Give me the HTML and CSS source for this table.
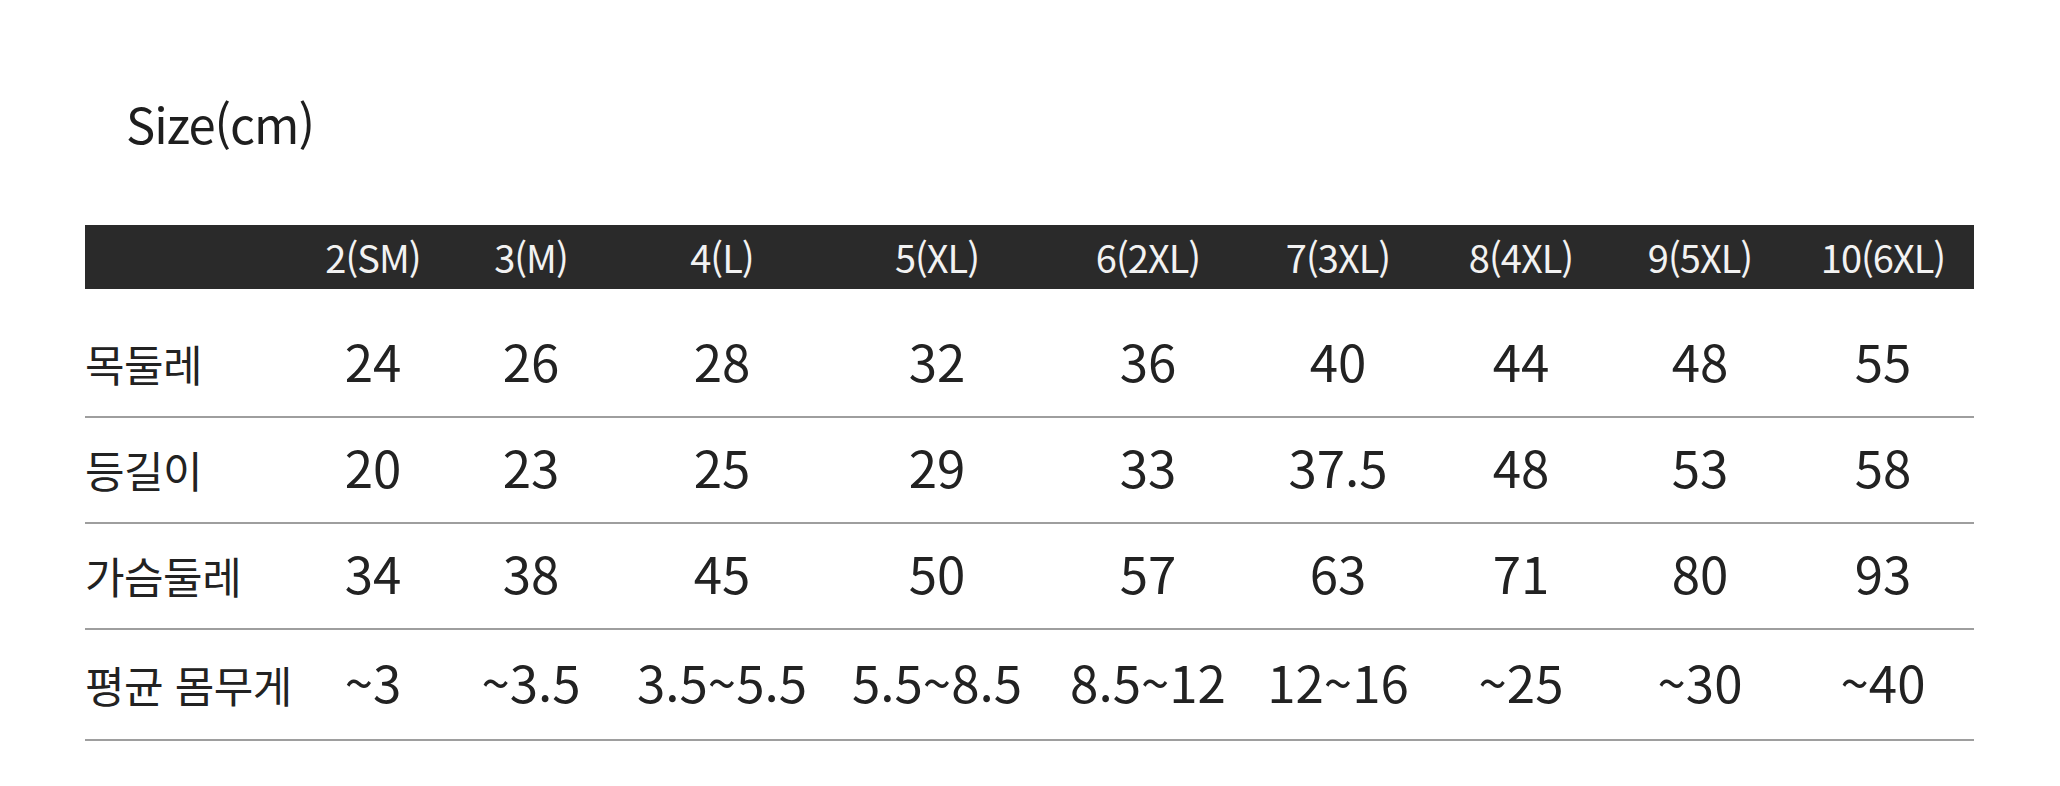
FILE: index.html
```html
<!DOCTYPE html>
<html lang="ko">
<head>
<meta charset="utf-8">
<title>Size chart</title>
<link rel="stylesheet" href="styles.css">
</head>
<body>
<main class="page">
  <h1 class="title">Size(cm)</h1>
  <table class="size-table">
    <colgroup>
      <col class="c-label">
      <col class="c1"><col class="c2"><col class="c3"><col class="c4">
      <col class="c5"><col class="c6"><col class="c7"><col class="c8"><col class="c9">
    </colgroup>
    <thead>
      <tr class="head-row">
        <th></th>
        <th>2(SM)</th><th>3(M)</th><th>4(L)</th><th>5(XL)</th><th>6(2XL)</th>
        <th>7(3XL)</th><th>8(4XL)</th><th>9(5XL)</th><th>10(6XL)</th>
      </tr>
    </thead>
    <tbody>
      <tr class="row row-first">
        <td class="label">목둘레</td>
        <td>24</td><td>26</td><td>28</td><td>32</td><td>36</td><td>40</td><td>44</td><td>48</td><td>55</td>
      </tr>
      <tr class="row">
        <td class="label">등길이</td>
        <td>20</td><td>23</td><td>25</td><td>29</td><td>33</td><td>37.5</td><td>48</td><td>53</td><td>58</td>
      </tr>
      <tr class="row">
        <td class="label">가슴둘레</td>
        <td>34</td><td>38</td><td>45</td><td>50</td><td>57</td><td>63</td><td>71</td><td>80</td><td>93</td>
      </tr>
      <tr class="row row-last">
        <td class="label">평균 몸무게</td>
        <td>~3</td><td>~3.5</td><td>3.5~5.5</td><td>5.5~8.5</td><td>8.5~12</td><td>12~16</td><td>~25</td><td>~30</td><td>~40</td>
      </tr>
    </tbody>
  </table>
</main>
</body>
</html>
```

FILE: styles.css
```css
* { box-sizing: border-box; }

html, body {
  margin: 0;
  padding: 0;
  background: #ffffff;
}

body {
  font-family: "Noto Sans CJK KR", "Noto Sans", sans-serif;
  color: #222222;
}

.page {
  padding: 0 86px 0 85px;
  width: 2060px;
}

.title {
  margin: 0;
  padding: 94px 0 0 41px;
  height: 225px;
  font-size: 49px;
  font-weight: 400;
  line-height: 58px;
  letter-spacing: -1px;
  color: #1e1e1e;
}

.size-table {
  width: 1889px;
  table-layout: fixed;
  border-collapse: collapse;
  border-spacing: 0;
}

.c-label { width: 223px; }
.c1 { width: 130px; }
.c2 { width: 186px; }
.c3 { width: 196px; }
.c4 { width: 234px; }
.c5 { width: 188px; }
.c6 { width: 192px; }
.c7 { width: 174px; }
.c8 { width: 184px; }
.c9 { width: 182px; }

.head-row {
  background: #2a2a2a;
  height: 64px;
}

.head-row th {
  padding: 0;
  font-size: 38px;
  font-weight: 400;
  color: #f2f2f2;
  text-align: center;
  vertical-align: middle;
  letter-spacing: -1px;
  line-height: 40px;
}

.row td {
  padding: 0 0 8px;
  text-align: center;
  vertical-align: middle;
  font-size: 51px;
  line-height: 60px;
  color: #222222;
  border-bottom: 2px solid #9e9e9e;
  height: 106px;
}

.row-first td {
  height: 128px;
  padding-top: 22px;
}

.row-last td {
  height: 111px;
}

.row td.label {
  text-align: left;
  font-size: 43px;
  letter-spacing: -0.5px;
  padding-bottom: 2px;
}
```
